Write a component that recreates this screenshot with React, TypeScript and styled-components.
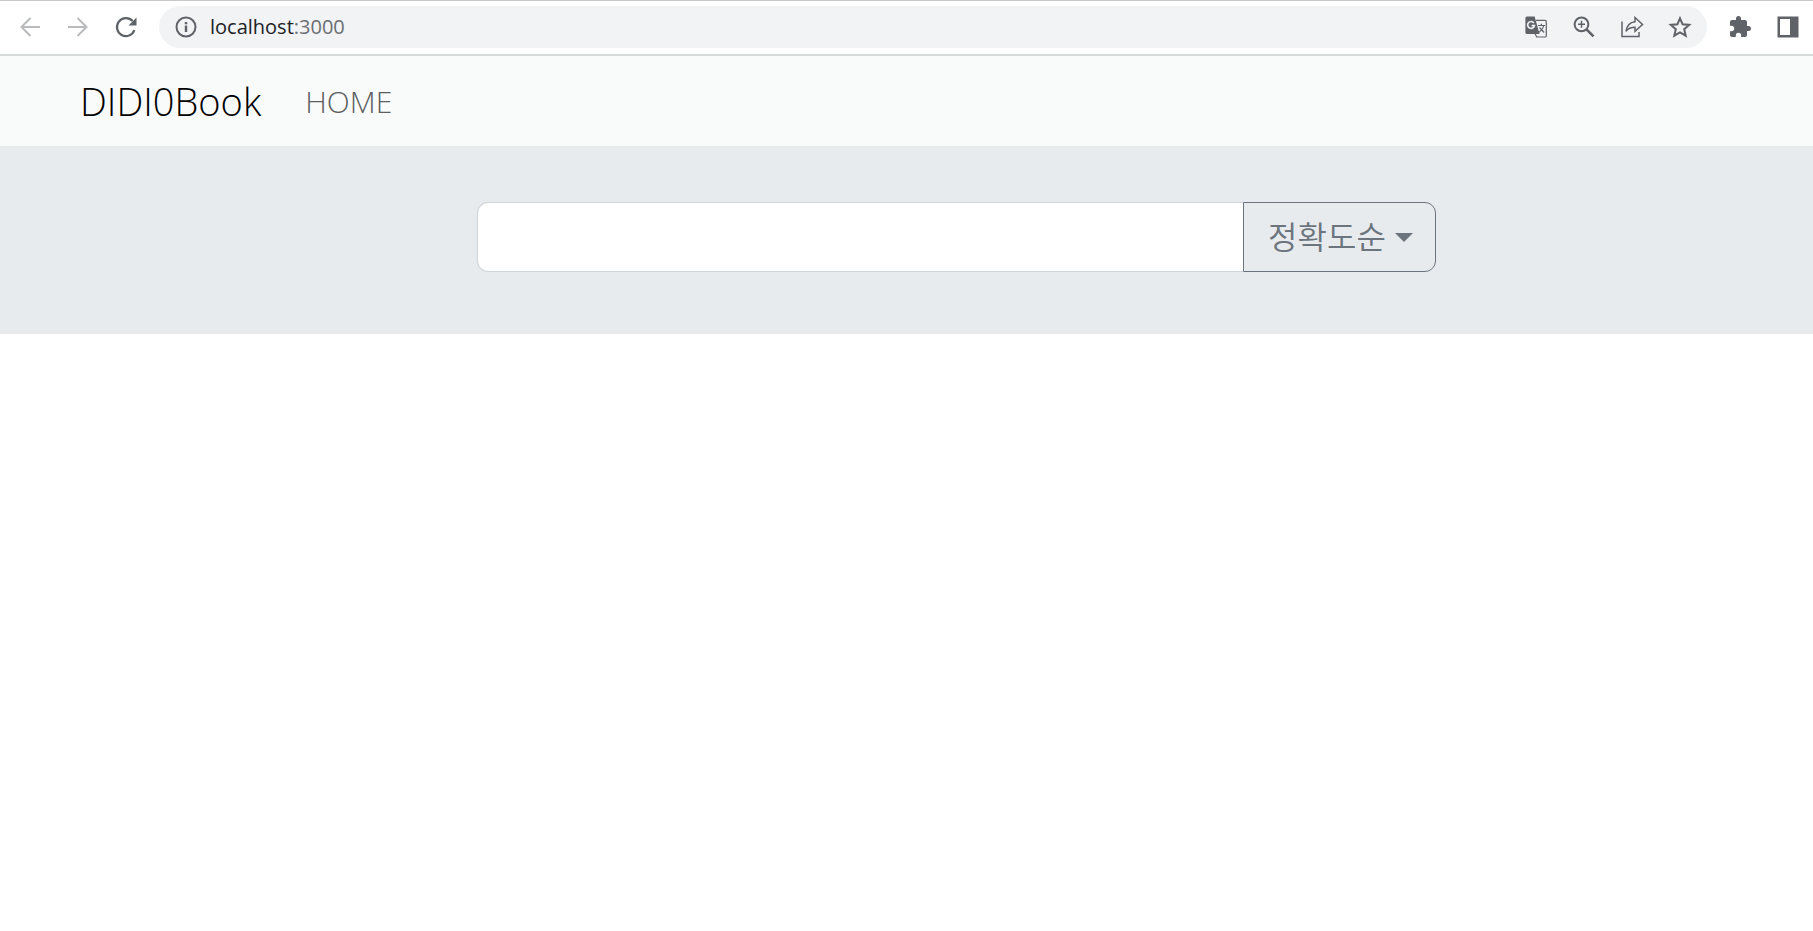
import React from "react";
import styled, { createGlobalStyle } from "styled-components";

const GlobalStyle = createGlobalStyle`
  * { box-sizing: border-box; }
  body {
    margin: 0;
    background: #fff;
    font-family: "Open Sans", "Noto Sans", "Noto Sans CJK KR", sans-serif;
  }
`;

const Toolbar = styled.header`
  display: flex;
  align-items: center;
  height: 56px;
  padding: 0 13px 1px 18px;
  border-top: 1px solid #c8c8c8;
  border-bottom: 2px solid #d8dbdc;
  background: #fff;
`;

const IconButton = styled.button<{ $muted?: boolean }>`
  display: flex;
  flex: none;
  align-items: center;
  justify-content: center;
  width: 24px;
  height: 24px;
  padding: 0;
  border: 0;
  background: none;
  color: ${(p) => (p.$muted ? "#b9babc" : "#5f6368")};
  cursor: pointer;

  svg { display: block; flex: none; }
`;

const HistoryGroup = styled.nav`
  display: flex;
  gap: 24px;
  margin-right: 21px;
`;

const AddressBar = styled.div`
  display: flex;
  flex: 1;
  align-items: center;
  gap: 12px;
  height: 42px;
  padding: 0 15px;
  border-radius: 21px;
  background: #f1f3f5;
`;

const Address = styled.div`
  flex: 1;
  font-size: 20px;
  line-height: 28px;
  color: #202124;
`;

const Port = styled.span`
  color: #6b6e72;
`;

const ActionGroup = styled.div`
  display: flex;
  gap: 24px;
`;

const ExtensionGroup = styled(ActionGroup)`
  margin-left: 21px;
`;

const Navbar = styled.nav`
  display: flex;
  align-items: center;
  gap: 44px;
  padding: 17px 80px;
  background: #f9fbfa;
`;

const Brand = styled.a`
  font-size: 38px;
  font-weight: 300;
  line-height: 56px;
  color: #000;
  text-decoration: none;
`;

const NavLink = styled.a`
  padding-top: 2px;
  font-size: 30px;
  font-weight: 300;
  line-height: 44px;
  color: #5c5e60;
  text-decoration: none;
`;

const SearchSection = styled.section`
  padding: 56px 0 62px;
  background: #e7ebee;
`;

const SearchGroup = styled.form`
  display: flex;
  width: 52.9%;
  height: 70px;
  margin-left: 26.3%;
`;

const SearchInput = styled.input`
  flex: 1;
  min-width: 0;
  padding: 0 22px;
  border: 1px solid #ced4da;
  border-right: 0;
  border-radius: 11px 0 0 11px;
  background: #fff;
  font: inherit;
  font-size: 30px;
  outline: 0;
`;

const SortButton = styled.button`
  display: flex;
  align-items: center;
  gap: 9px;
  padding: 0 22px 0 24px;
  border: 1px solid #6c757d;
  border-radius: 0 11px 11px 0;
  background: transparent;
  color: #6c757d;
  font: inherit;
  font-size: 32px;
  font-weight: 350;
  line-height: 44px;
  cursor: pointer;
`;

const Caret = styled.span`
  border-top: 9px solid currentColor;
  border-right: 9px solid transparent;
  border-left: 9px solid transparent;
`;

const ArrowIcon = ({ flip }: { flip?: boolean }) => (
  <svg width="24" height="24" viewBox="0 0 24 24" fill="none" stroke="currentColor" strokeWidth="2">
    {flip ? <path d="M2 12h18M11.500 3l9 9-9 9" /> : <path d="M22 12H4M12.500 3l-9 9 9 9" />}
  </svg>
);

const ReloadIcon = () => (
  <svg width="24" height="24" viewBox="0 0 24 24">
    <path d="M20.400 15.200A9 9 0 1 1 18.600 6" fill="none" stroke="currentColor" strokeWidth="2.200" />
    <path d="M22.500 2.500v8h-8z" fill="currentColor" />
  </svg>
);

const InfoIcon = () => (
  <svg width="24" height="24" viewBox="0 0 24 24">
    <circle cx="12" cy="12" r="9.500" fill="none" stroke="currentColor" strokeWidth="2" />
    <path d="M10.800 10.600h2.400V17h-2.400zM10.800 7h2.400v2.300h-2.400z" fill="currentColor" />
  </svg>
);

const TranslateIcon = () => (
  <svg width="24" height="24" viewBox="0 0 24 24">
    <path d="M12 5.400h9a1.300 1.300 0 0 1 1.300 1.300v14A1.300 1.300 0 0 1 21 22h-8.300l-2-4" fill="none" stroke="currentColor" strokeWidth="1.200" />
    <path d="M3 1.500h7.600l5 17.500H3a1.600 1.600 0 0 1-1.600-1.600V3.100A1.600 1.600 0 0 1 3 1.500z" fill="currentColor" />
    <path d="M9.800 7.900A3.400 3.400 0 1 0 10.400 10.500H7.500" fill="none" stroke="#f1f3f5" strokeWidth="1.700" />
    <path d="M14 10.500h7M17.300 8.800v1.700M19.800 10.500c-.6 3-2.200 5-4.600 6.800M15.500 12.500l4.700 5" fill="none" stroke="currentColor" strokeWidth="1.200" />
  </svg>
);

const ZoomIcon = () => (
  <svg width="24" height="24" viewBox="0 0 24 24" fill="none" stroke="currentColor">
    <circle cx="9.500" cy="9.300" r="6.900" strokeWidth="2" />
    <path d="M14.500 14.300l7 7" strokeWidth="2.600" />
    <path d="M9.500 5.800v7M6 9.300h7" strokeWidth="1.500" />
  </svg>
);

const ShareIcon = () => (
  <svg width="24" height="24" viewBox="0 0 24 24" fill="none" stroke="currentColor" strokeWidth="1.500">
    <path d="M2 6.500V21.500h17v-4.500" />
    <path d="M15 2.500l7.500 7-7.500 6.800v-4c-4 0-6.800 1-9 4 .8-5.500 3.800-9 9-9.600z" />
  </svg>
);

const StarIcon = () => (
  <svg width="24" height="24" viewBox="0 0 24 24" fill="none" stroke="currentColor" strokeWidth="2">
    <path d="M12 3.300l2.600 6 6.600.6-5 4.300 1.500 6.500L12 17.300l-5.700 3.400 1.500-6.500-5-4.300 6.600-.6z" />
  </svg>
);

const ExtensionIcon = () => (
  <svg width="24" height="24" viewBox="0 0 24 24" fill="currentColor">
    <path d="M20.500 11H19V7c0-1.100-.9-2-2-2h-4V3.500a2.500 2.500 0 0 0-5 0V5H4c-1.100 0-1.990.9-1.990 2v3.800H3.500a2.700 2.700 0 0 1 0 5.400H2V20c0 1.100.9 2 2 2h3.800v-1.500a2.700 2.700 0 0 1 5.400 0V22H17c1.100 0 2-.9 2-2v-4h1.500a2.500 2.500 0 0 0 0-5z" />
  </svg>
);

const SidePanelIcon = () => (
  <svg width="24" height="24" viewBox="0 0 24 24">
    <path d="M1.500 1.500h21v21h-21zM4 4v16h10V4z" fill="currentColor" fillRule="evenodd" />
  </svg>
);

export default function App() {
  return (
    <>
      <GlobalStyle />
      <Toolbar>
        <HistoryGroup aria-label="History">
          <IconButton $muted aria-label="Back"><ArrowIcon /></IconButton>
          <IconButton $muted aria-label="Forward"><ArrowIcon flip /></IconButton>
          <IconButton aria-label="Reload"><ReloadIcon /></IconButton>
        </HistoryGroup>
        <AddressBar>
          <IconButton aria-label="Site information"><InfoIcon /></IconButton>
          <Address>localhost<Port>:3000</Port></Address>
          <ActionGroup>
            <IconButton aria-label="Translate"><TranslateIcon /></IconButton>
            <IconButton aria-label="Zoom"><ZoomIcon /></IconButton>
            <IconButton aria-label="Share"><ShareIcon /></IconButton>
            <IconButton aria-label="Bookmark"><StarIcon /></IconButton>
          </ActionGroup>
        </AddressBar>
        <ExtensionGroup>
          <IconButton aria-label="Extensions"><ExtensionIcon /></IconButton>
          <IconButton aria-label="Side panel"><SidePanelIcon /></IconButton>
        </ExtensionGroup>
      </Toolbar>
      <Navbar>
        <Brand href="#">DIDI0Book</Brand>
        <NavLink href="#">HOME</NavLink>
      </Navbar>
      <SearchSection>
        <SearchGroup onSubmit={(e) => e.preventDefault()}>
          <SearchInput type="text" aria-label="검색" />
          <SortButton type="button">정확도순<Caret /></SortButton>
        </SearchGroup>
      </SearchSection>
    </>
  );
}
